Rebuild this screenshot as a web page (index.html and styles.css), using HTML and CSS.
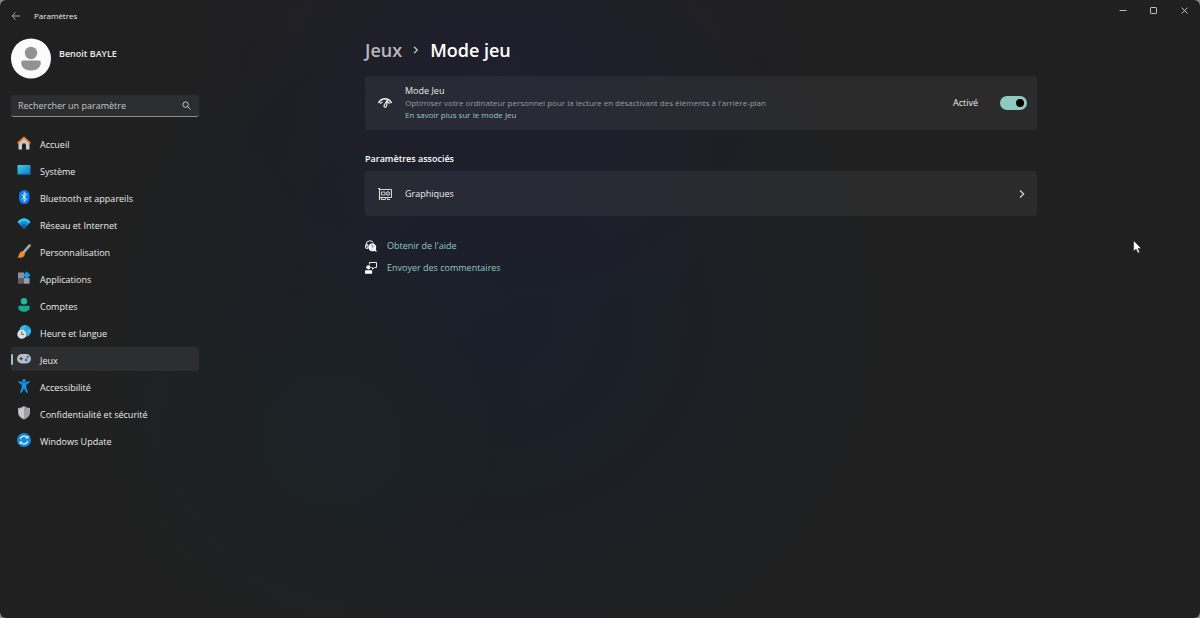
FILE: index.html
```html
<!DOCTYPE html>
<html lang="fr">

<head>
    <meta charset="UTF-8">
    <meta name="viewport" content="width=device-width, initial-scale=1.0">
    <title>Paramètres</title>
    <link rel="stylesheet" href="styles.css">
</head>

<body>
    <div class="window">
        <header class="titlebar">
            <button class="back" aria-label="Retour">
                <svg width="10" height="10" viewBox="0 0 10 10" fill="none" stroke="#a4a4a4"><path d="M9 5H1.2M4.6 1.4L1 5l3.6 3.6" /></svg>
            </button>
            <span class="app-name">Paramètres</span>
            <div class="window-buttons">
                <button aria-label="Réduire">
                    <svg width="8" height="8" viewBox="0 0 8 8" stroke="#c0c0c0"><path d="M.5 3.5h7" /></svg>
                </button>
                <button aria-label="Agrandir">
                    <svg width="8" height="8" viewBox="0 0 8 8" fill="none" stroke="#c0c0c0"><rect x=".5" y=".5" width="6" height="6" rx=".6" /></svg>
                </button>
                <button aria-label="Fermer">
                    <svg width="8" height="8" viewBox="0 0 8 8" stroke="#c0c0c0"><path d="M.6.6l6 6M6.600.6l-6 6" /></svg>
                </button>
            </div>
        </header>

        <div class="content">
            <aside class="sidebar">
                <div class="account">
                    <svg class="avatar" width="40" height="41" viewBox="0 0 40 40">
                        <circle cx="20" cy="20" r="20" fill="#fbfbfb" />
                        <circle cx="20" cy="14.5" r="6.2" fill="#929292" />
                        <path d="M12 22h16a1.800 1.800 0 0 1 1.800 2c0 5-4 8-9.800 8s-9.800-3-9.800-8a1.800 1.800 0 0 1 1.800-2z" fill="#929292" />
                    </svg>
                    <span class="account-name">Benoit BAYLE</span>
                </div>

                <form class="search">
                    <input type="text" placeholder="Rechercher un paramètre" aria-label="Rechercher un paramètre">
                    <svg width="9" height="9" viewBox="0 0 9 9" fill="none" stroke="#c8c8c8"><circle cx="3.600" cy="3.600" r="2.700" /><path d="M5.600 5.600L8.500 8.500" /></svg>
                </form>

                <nav class="nav">
                    <a href="#">
                        <svg width="14" height="14" viewBox="0 0 14 14">
                            <path d="M1.500 6L7 1.500 12.500 6v7a.6.600 0 0 1-.6.600H9V9.200a2 2 0 0 0-4 0v4.400H2.100a.6.600 0 0 1-.6-.6z" fill="#c9c9c9" />
                            <path d="M1 6.800L7 1.300l6 5.500" fill="none" stroke="#ea7420" stroke-width="1.700" stroke-linecap="round" stroke-linejoin="round" />
                        </svg>
                        Accueil
                    </a>
                    <a href="#">
                        <svg width="14" height="14" viewBox="0 0 14 14">
                            <defs><linearGradient id="screen" x1="0" y1="0" x2="1" y2="1"><stop offset="0" stop-color="#38d2ee" /><stop offset="1" stop-color="#1375be" /></linearGradient></defs>
                            <rect x=".5" y="2" width="13" height="10" rx=".8" fill="url(#screen)" />
                            <path d="M1 11.300h12" stroke="#0c5687" />
                        </svg>
                        Système
                    </a>
                    <a href="#">
                        <svg width="14" height="14" viewBox="0 0 14 14">
                            <rect x="2" y="0" width="10.500" height="14" rx="5.200" fill="#0a7cf2" />
                            <path d="M4.700 4.600l4.800 4.600-2.400 2.200V2.600l2.400 2.200-4.800 4.600" fill="none" stroke="#fff" stroke-width=".9" />
                        </svg>
                        Bluetooth et appareils
                    </a>
                    <a href="#">
                        <svg width="14" height="14" viewBox="0 0 14 14">
                            <path d="M.4 5C4-.1 10-.1 13.600 5L7 11.800z" fill="#35c6f2" />
                            <path d="M2 6.600C5 3 9 3 12 6.600L7 11.800z" fill="#168bd8" />
                            <path d="M4 8.600c2-2 4-2 6 0l-3 3.200z" fill="#0a62b1" />
                        </svg>
                        Réseau et Internet
                    </a>
                    <a href="#">
                        <svg width="14" height="14" viewBox="0 0 14 14">
                            <path d="M5 8.200L11.600.8q1.200-1.100 1.900-.4t-.2 2L7.200 10z" fill="#b4b4b4" />
                            <path d="M7.500 8.500l5.800-6.400" stroke="#777" stroke-width=".9" />
                            <path d="M4.800 7.200l3.100 2.900c-.4 3.700-4 4-7.600 3.500 2-1 1.300-5.700 4.500-6.400z" fill="#f28b20" />
                        </svg>
                        Personnalisation
                    </a>
                    <a href="#">
                        <svg width="14" height="14" viewBox="0 0 14 14">
                            <path d="M1 1.500h6v5.500H1z" fill="#8d9298" />
                            <path d="M1 7h6v5.700H1z" fill="#5b6067" />
                            <path d="M7 7h5.500v5.700H7z" fill="#989ea6" />
                            <path d="M9.500.5l4 3.600-3.600 4L5.900 4.500z" fill="#1a96ea" />
                        </svg>
                        Applications
                    </a>
                    <a href="#">
                        <svg width="14" height="14" viewBox="0 0 14 14" fill="#1fb89c">
                            <circle cx="7" cy="3.300" r="3.200" />
                            <path d="M2.500 7.800h9q1.300 0 1.300 1.400c0 2.800-2.500 4.500-5.800 4.500S1.200 12 1.200 9.200q0-1.400 1.300-1.400z" fill="#17a78d" />
                        </svg>
                        Comptes
                    </a>
                    <a href="#">
                        <svg width="14" height="14" viewBox="0 0 14 14">
                            <circle cx="8.100" cy="6" r="5.900" fill="#23a5df" />
                            <path d="M4 2q2-2 5-1.800l-1 3.300L5 7 3 5zM10 5l3.500-1q1 3-1 5.600L9.500 8z" fill="#3bbce6" />
                            <circle cx="4.800" cy="9.200" r="4.500" fill="#dcdfe2" />
                            <path d="M4.800 6.500v3h2.300" fill="none" stroke="#555" stroke-width=".9" />
                        </svg>
                        Heure et langue
                    </a>
                    <a href="#" class="selected" aria-current="page">
                        <svg width="14" height="14" viewBox="0 0 14 14">
                            <rect x="0" y="2" width="14" height="9.400" rx="4.700" fill="#b8bec5" />
                            <path d="M2.500 6.600h3.200M4.100 5v3.200" stroke="#3c4146" stroke-width="1.100" />
                            <circle cx="10.800" cy="4.900" r="1.100" fill="#1c77d2" />
                            <circle cx="9.200" cy="7.900" r="1.300" fill="#1c77d2" />
                        </svg>
                        Jeux
                    </a>
                    <a href="#">
                        <svg width="14" height="14" viewBox="0 0 14 14" fill="#1490e2">
                            <circle cx="7" cy="1.900" r="1.800" />
                            <path d="M1.400 2.700Q1.800 1.600 3 2.200L7 4l4-1.800q1.200-.6 1.600.5.300.9-.7 1.400L9.300 5.400v3l1.500 4.300q.2 1-.6 1.200-.9.200-1.200-.6L7 9.500l-2 3.800q-.3.800-1.200.6-.8-.2-.6-1.200l1.500-4.300v-3L2.100 4.100q-1-.5-.7-1.400z" />
                        </svg>
                        Accessibilité
                    </a>
                    <a href="#">
                        <svg width="14" height="14" viewBox="0 0 14 14">
                            <path d="M7 0q2.500 2 6 2v4.500c0 3.500-2.500 5.500-6 7-3.500-1.500-6-3.500-6-7V2q3.500 0 6-2z" fill="#a7abb2" />
                            <path d="M7 1q2 1.700 5 1.900v3.600c0 3-2 4.600-5 5.900z" fill="#9ca1a8" />
                            <path d="M7 1Q5 2.700 2 2.900v3.600c0 3 2 4.600 5 5.900z" fill="#c7cad0" />
                        </svg>
                        Confidentialité et sécurité
                    </a>
                    <a href="#">
                        <svg width="14" height="14" viewBox="0 0 14 14">
                            <circle cx="7" cy="7" r="7" fill="#1287df" />
                            <path d="M3.200 6.200C4 2.600 8.500 2 10.600 4.900M10.800 7.800C10 11.400 5.500 12 3.400 9.100" fill="none" stroke="#e9f5ff" stroke-width="1.200" />
                            <path d="M11.400 2.600v3H8.400zM2.600 11.400v-3h3z" fill="#e9f5ff" />
                        </svg>
                        Windows Update
                    </a>
                </nav>
            </aside>

            <main class="page">
                <h1 class="breadcrumb">
                    <a href="#">Jeux</a>
                    <svg width="6" height="8" viewBox="0 0 6 8" fill="none" stroke="#c4c4c4" stroke-width="1.200"><path d="M1 .8L4.400 4 1 7.200" /></svg>
                    <span>Mode jeu</span>
                </h1>

                <section class="card card-mode">
                    <svg class="card-icon" width="14" height="14" viewBox="0 0 14 14" fill="none" stroke="#ececec" stroke-linecap="round">
                        <path d="M.8 6.500Q3 2.900 7 2.800q4 .1 6.200 3.700" stroke-width="1.500" />
                        <path d="M2.700 7.300l1.500-1.200M11.300 7.300l-1.200-1" stroke-width="1.200" />
                        <path d="M9.700 3.500L6.300 9a1.300 1.300 0 1 0 2.100 1.500z" fill="#292a39" stroke-width="1.200" stroke-linejoin="round" />
                    </svg>
                    <div class="card-text">
                        <label class="card-title" for="game-mode">Mode Jeu</label>
                        <p class="card-description">Optimiser votre ordinateur personnel pour la lecture en désactivant des éléments à l'arrière-plan</p>
                        <a class="card-link" href="#">En savoir plus sur le mode Jeu</a>
                    </div>
                    <span class="state">Activé</span>
                    <input class="toggle" type="checkbox" role="switch" id="game-mode" checked>
                </section>

                <h2 class="section-title">Paramètres associés</h2>

                <a class="card card-graphics" href="#">
                    <svg class="card-icon" width="14" height="14" viewBox="0 0 14 14" fill="none" stroke="#d8d8d8">
                        <path d="M0 1.500h1.500V13" stroke-width="1.200" />
                        <path d="M1.500 2.500h12v8h-12M3.500 10.500v2h4v-2M9.500 10.500v2h2.500" />
                        <circle cx="10" cy="6.500" r="1.800" />
                        <path d="M3.500 5h3.500v3H3.500zM9 7.500l2-2" stroke-width=".9" />
                    </svg>
                    <span class="card-title">Graphiques</span>
                    <svg width="6" height="8" viewBox="0 0 6 8" fill="none" stroke="#d8d8d8" stroke-width="1.200"><path d="M1 .5L4.700 4 1 7.500" /></svg>
                </a>

                <div class="help">
                    <a href="#">
                        <svg width="12" height="12" viewBox="0 0 12 12">
                            <path d="M1 7.500V4.800Q1.200.9 4.800.8q2.500 0 3.500 1.700M2.800 4.500v4H1.200q-.7-.2-.7-1v-2q0-.9.700-1z" fill="none" stroke="#ececec" />
                            <path d="M7.200 3.300a4 4 0 0 1 3.600 5.700l1 2.700-2.700-.8A4 4 0 1 1 7.200 3.300z" fill="#fff" />
                            <path d="M6.100 6.300q.1-1 1.100-1t1.100.9q0 .6-1.100 1.300v.5M7.200 8.700v.9" fill="none" stroke="#444" stroke-width=".7" />
                        </svg>
                        Obtenir de l'aide
                    </a>
                    <a href="#">
                        <svg width="12" height="12" viewBox="0 0 12 12">
                            <circle cx="3.400" cy="5.300" r="2.100" fill="#fff" />
                            <path d="M.8 8.200h5.400q.9 0 .9.900v2.700H0V9.100q0-.9.800-.9z" fill="#fff" />
                            <path d="M4.500 2.500v-2h7v5h-2L7.500 7.300V5.500h-1" fill="none" stroke="#ececec" />
                        </svg>
                        Envoyer des commentaires
                    </a>
                </div>
            </main>
        </div>

        <svg class="pointer" width="9" height="14" viewBox="0 0 9 14"><path d="M.6.600v10.700l2.500-2.200 1.700 3.900 1.900-.8L5 8.400h3.300z" fill="#fff" stroke="#111" stroke-width=".5" /></svg>
    </div>
</body>

</html>
```
FILE: styles.css
```css
body {
    margin: 0;
    background-color: #8a8a8a;
    color: #ececec;
    font-family: 'Open Sans', 'Noto Sans', sans-serif;
    font-size: 9px;
    line-height: 12px;
}

.window {
    position: relative;
    box-sizing: border-box;
    min-height: 100vh;
    border-radius: 6px;
    background-color: #202020;
    background-image:
        radial-gradient(ellipse 330px 280px at 500px 70px, rgba(31, 30, 48, 0.75), transparent),
        radial-gradient(ellipse 240px 220px at 330px 440px, rgba(27, 36, 37, 0.5), transparent),
        radial-gradient(ellipse 400px 380px at 500px 320px, rgba(26, 32, 43, 1), rgba(27, 32, 41, 0.7) 50%, transparent);
}

a {
    color: inherit;
    text-decoration: none;
}

button {
    display: flex;
    align-items: center;
    justify-content: center;
    padding: 0;
    border: none;
    background: none;
}

svg {
    flex: none;
}

.titlebar {
    display: flex;
    align-items: flex-start;
    height: 32px;
}

.back {
    width: 32px;
    height: 32px;
}

.app-name {
    flex: 1;
    padding-left: 2px;
    font-size: 8px;
    line-height: 32px;
}

.window-buttons {
    display: flex;
}

.window-buttons button {
    width: 31px;
    height: 22px;
}

.content {
    display: flex;
}

.sidebar {
    box-sizing: border-box;
    flex: none;
    width: 210px;
    padding: 6px 11px 0;
}

.account {
    display: flex;
    gap: 8px;
}

.account-name {
    padding-top: 10px;
    font-weight: 600;
}

.search {
    display: flex;
    align-items: center;
    box-sizing: border-box;
    height: 22px;
    margin-top: 16px;
    padding: 0 8px 0 7px;
    border-bottom: 1px solid #8c8c8c;
    border-radius: 3px;
    background-color: #2c2d2e;
}

.search input {
    flex: 1;
    min-width: 0;
    padding: 0;
    border: none;
    outline: none;
    background: none;
    color: #ececec;
    font: inherit;
}

.search input::placeholder {
    color: #c8c8c8;
}

.nav {
    display: flex;
    flex-direction: column;
    gap: 3px;
    margin-top: 14px;
}

.nav a {
    display: flex;
    align-items: center;
    gap: 9px;
    box-sizing: border-box;
    height: 24px;
    padding: 4px 0 0 6px;
    border-radius: 3px;
}

.nav svg {
    margin-bottom: 4px;
}

.nav .selected {
    position: relative;
    background-color: #2d2e2f;
}

.nav .selected::before {
    content: "";
    position: absolute;
    left: 0;
    top: 7px;
    width: 2px;
    height: 11px;
    border-radius: 1px;
    background-color: #8fcac0;
}

.page {
    flex: 1;
    max-width: 672px;
    margin: 0 auto;
    padding: 5px 8px 0 0;
}

.breadcrumb {
    display: flex;
    align-items: center;
    gap: 11px;
    margin: 0 0 13px;
    font-size: 18px;
    font-weight: 600;
    line-height: 26px;
    color: #fff;
}

.breadcrumb a {
    color: #b9b9bd;
}

.card {
    display: flex;
    align-items: center;
    box-sizing: border-box;
    padding: 0 10px 0 13px;
    border-radius: 3px;
    background-color: rgba(255, 255, 255, 0.05);
}

.card-mode {
    height: 54px;
}

.card-graphics {
    height: 45px;
    padding-right: 12px;
}

.card-icon {
    margin-right: 13px;
}

.card-text {
    flex: 1;
}

.card-title {
    display: block;
    flex: 1;
}

.card-description {
    margin: 0;
    font-size: 8px;
    color: #9b9ba0;
}

.card-link {
    display: block;
    font-size: 8px;
    color: #8fcac0;
}

.state {
    margin-right: 22px;
}

.toggle {
    appearance: none;
    display: flex;
    align-items: center;
    justify-content: flex-end;
    box-sizing: border-box;
    width: 27px;
    height: 14px;
    margin: 0;
    padding: 3px;
    border-radius: 7px;
    background-color: #5a5a5a;
}

.toggle::before {
    content: "";
    width: 8px;
    height: 8px;
    border-radius: 50%;
    background-color: #000;
}

.toggle:checked {
    background-color: #8fcac0;
}

.toggle:not(:checked) {
    justify-content: flex-start;
}

.section-title {
    margin: 23px 0 6px;
    font-size: 9px;
    font-weight: 600;
    line-height: 12px;
    color: #fff;
}

.help {
    display: flex;
    flex-direction: column;
    align-items: flex-start;
    gap: 10px;
    margin-top: 24px;
}

.help a {
    display: flex;
    align-items: center;
    gap: 10px;
    color: #8fcac0;
}

.pointer {
    position: absolute;
    left: 1133px;
    top: 240px;
}
```
